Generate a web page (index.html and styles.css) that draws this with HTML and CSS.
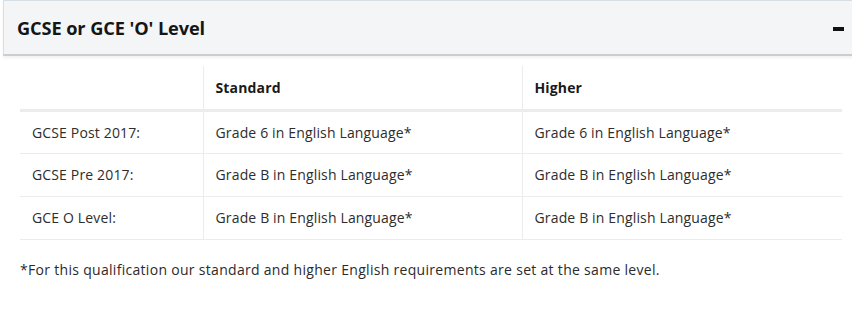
FILE: index.html
```html
<!DOCTYPE html>
<html lang="en">
<head>
<meta charset="utf-8">
<title>GCSE or GCE 'O' Level</title>
<link rel="stylesheet" href="styles.css">
</head>
<body>
<section class="panel">
  <div class="panel-head">
    <h2 class="panel-title">GCSE or GCE 'O' Level</h2>
    <span class="toggle" aria-label="collapse"></span>
  </div>
  <div class="panel-body">
    <table class="req-table">
      <thead>
        <tr>
          <th></th>
          <th>Standard</th>
          <th>Higher</th>
        </tr>
      </thead>
      <tbody>
        <tr>
          <td>GCSE Post 2017:</td>
          <td>Grade 6 in English Language*</td>
          <td>Grade 6 in English Language*</td>
        </tr>
        <tr>
          <td>GCSE Pre 2017:</td>
          <td>Grade B in English Language*</td>
          <td>Grade B in English Language*</td>
        </tr>
        <tr>
          <td>GCE O Level:</td>
          <td>Grade B in English Language*</td>
          <td>Grade B in English Language*</td>
        </tr>
      </tbody>
    </table>
    <p class="note">*For this qualification our standard and higher English requirements are set at the same level.</p>
  </div>
</section>
</body>
</html>
```

FILE: styles.css
```css
* { box-sizing: border-box; }
html, body { margin: 0; padding: 0; background: #fff; }
body {
  font-family: "Open Sans", "Noto Sans", sans-serif;
  color: #2b2b2b;
  overflow: hidden;
}
.panel {
  margin-left: 3px;
  margin-right: -10px;
}
.panel-head {
  display: flex;
  align-items: center;
  justify-content: space-between;
  height: 56px;
  padding: 0 17px 0 13px;
  background: #f3f5f7;
  border: 1px solid #d6dee6;
  border-bottom: 2px solid #c9ced3;
  box-shadow: 0 2px 3px rgba(0,0,0,0.06);
}
.panel-title {
  margin: 0;
  font-size: 18.2px;
  font-weight: 700;
  color: #151515;
  letter-spacing: -0.1px;
}
.toggle {
  width: 11px;
  height: 4px;
  background: #111;
  margin-top: 2px;
}
.panel-body {
  padding: 10px 0 0 17px;
  width: 849px;
}
.req-table {
  width: 822px;
  border-collapse: collapse;
  font-size: 14px;
  letter-spacing: 0.15px;
}
.req-table th,
.req-table td {
  text-align: left;
  height: 43px;
  padding: 0 12px;
  border-left: 1px solid #ececec;
  border-bottom: 1px solid #ececec;
  vertical-align: middle;
}
.req-table th:first-child,
.req-table td:first-child {
  border-left: none;
  width: 183px;
}
.req-table th:nth-child(2),
.req-table td:nth-child(2) { width: 319px; }
.req-table th {
  font-weight: 700;
  color: #1a1a1a;
  height: 44px;
  border-bottom: 3px solid #ececec;
}
.req-table td { color: #2d2d2d; }
.note {
  margin: 20px 0 0 0;
  font-size: 14px;
  letter-spacing: 0.3px;
  color: #2b2b2b;
}
```
